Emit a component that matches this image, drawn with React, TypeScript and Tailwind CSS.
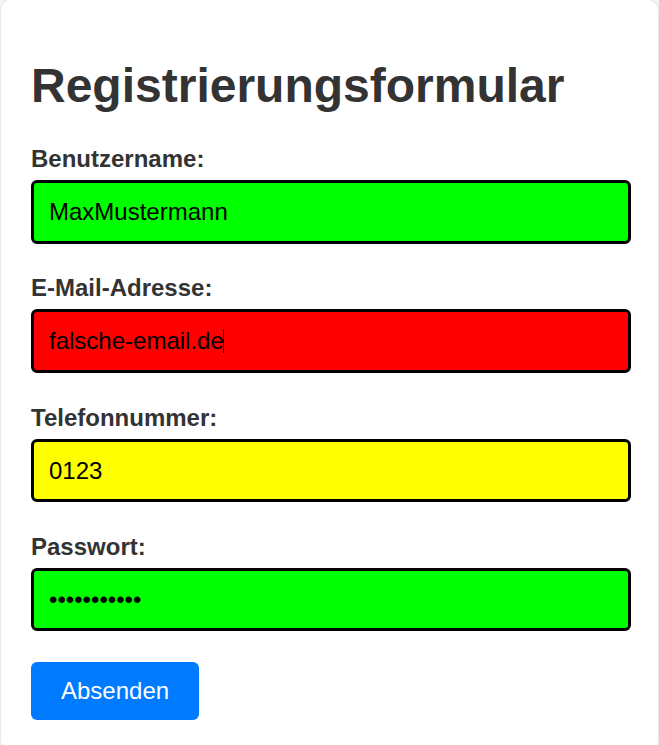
type Field = {
  id: string;
  label: string;
  type: string;
  value: string;
  bg: string;
  caret?: boolean;
};

const fields: Field[] = [
  { id: "username", label: "Benutzername:", type: "text", value: "MaxMustermann", bg: "bg-[#00ff00]" },
  { id: "email", label: "E-Mail-Adresse:", type: "text", value: "falsche-email.de", bg: "bg-[#ff0000]", caret: true },
  { id: "phone", label: "Telefonnummer:", type: "tel", value: "0123", bg: "bg-[#ffff00]" },
  { id: "password", label: "Passwort:", type: "password", value: "geheim12345", bg: "bg-[#00ff00]" },
];

export default function App() {
  return (
    <div className="min-h-screen overflow-hidden bg-[#f4f4f4] font-['Liberation_Sans',Arial,sans-serif]">
      <div className="ml-[1px] w-[657px] rounded-[10px] bg-white px-[30px] pt-[26px] pb-[30px] shadow-[0_0_3px_rgba(0,0,0,0.12)]">
        <h1 className="mb-[32px] mt-[32px] text-[48px] font-bold leading-[1.15] text-[#333]">
          Registrierungsformular
        </h1>
        <form onSubmit={(e) => e.preventDefault()}>
          {fields.map((f) => (
            <div key={f.id} className="mb-[30.5px]">
              <label
                htmlFor={f.id}
                className="mb-[7.5px] block text-[24px] font-bold leading-[1.15] text-[#333]"
              >
                {f.label}
              </label>
              <div className="relative w-[600px]">
                <input
                  id={f.id}
                  type={f.type}
                  defaultValue={f.value}
                  className={`block w-[600px] rounded-[6px] border-[3px] border-black px-[15px] py-[15px] text-[24px] leading-[1.15] text-black outline-none ${f.bg}`}
                />
                {f.caret && (
                  <span className="pointer-events-none absolute left-[192px] top-[20px] h-[24px] w-px bg-black" />
                )}
              </div>
            </div>
          ))}
          <button
            type="submit"
            className="rounded-[6px] bg-[#007bff] px-[30px] py-[15px] text-[24px] leading-[1.15] text-white"
          >
            Absenden
          </button>
        </form>
      </div>
    </div>
  );
}
